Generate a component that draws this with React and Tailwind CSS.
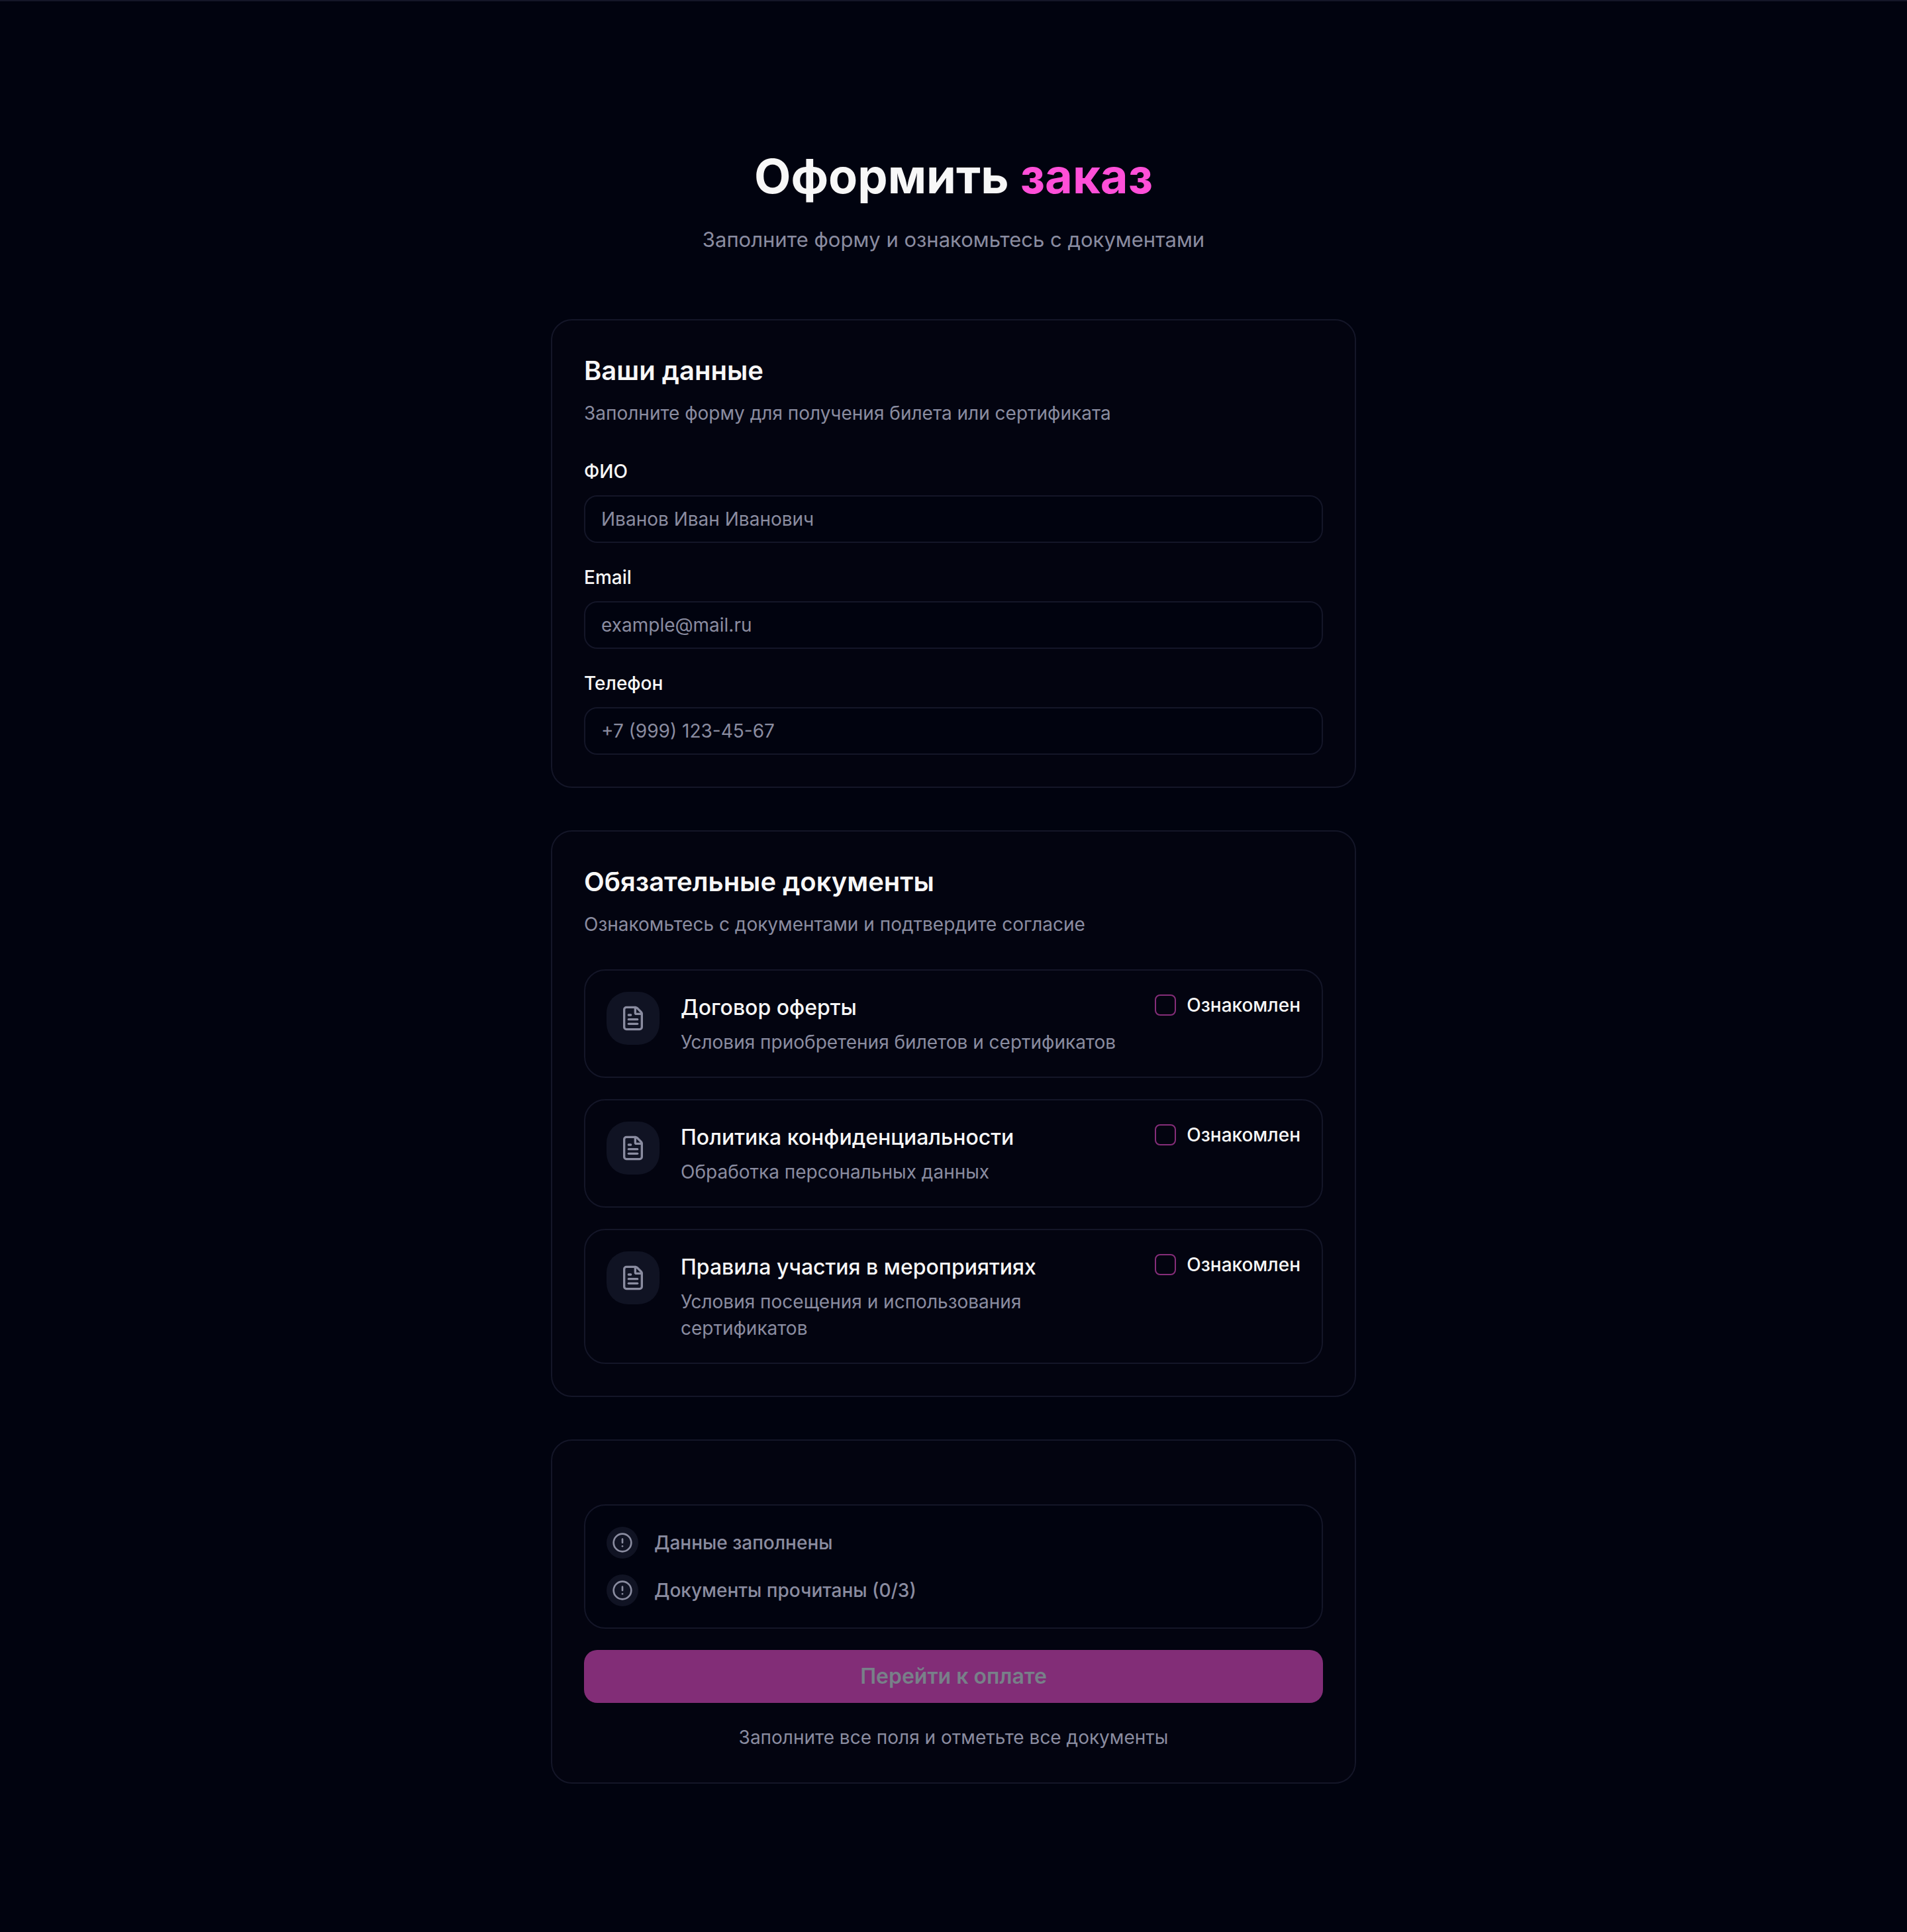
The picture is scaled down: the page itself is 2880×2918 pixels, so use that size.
import { useState } from 'react';
import { FileText, CircleAlert } from 'lucide-react';

const FIELDS = [
  { id: 'name', label: 'ФИО', type: 'text', placeholder: 'Иванов Иван Иванович' },
  { id: 'email', label: 'Email', type: 'email', placeholder: 'example@mail.ru' },
  { id: 'phone', label: 'Телефон', type: 'tel', placeholder: '+7 (999) 123-45-67' },
];

const DOCUMENTS = [
  { id: 'offer', title: 'Договор оферты', description: 'Условия приобретения билетов и сертификатов' },
  { id: 'privacy', title: 'Политика конфиденциальности', description: 'Обработка персональных данных' },
  { id: 'rules', title: 'Правила участия в мероприятиях', description: 'Условия посещения и использования сертификатов' },
];

function Card({ children }) {
  return (
    <section className="rounded-[32px] border-2 border-[#141628] bg-[#030410] p-12">
      {children}
    </section>
  );
}

function CardHeader({ title, description }) {
  return (
    <div className="mb-12 flex flex-col gap-4">
      <h2 className="text-[40px] leading-14 font-semibold text-[#f7f7f7]">{title}</h2>
      <p className="text-[28px] leading-10 text-[#8a8ca0]">{description}</p>
    </div>
  );
}

function StatusRow({ children }) {
  return (
    <li className="flex items-center gap-6">
      <span className="flex size-12 items-center justify-center rounded-full bg-[#101323]">
        <CircleAlert className="size-8 text-[#8a8ca0]" />
      </span>
      <span className="text-[28px] leading-10 font-medium text-[#8a8ca0]">{children}</span>
    </li>
  );
}

export default function App() {
  const [values, setValues] = useState({ name: '', email: '', phone: '' });
  const [accepted, setAccepted] = useState({});

  const acceptedCount = DOCUMENTS.filter((doc) => accepted[doc.id]).length;
  const filled = FIELDS.every((field) => values[field.id].trim() !== '');
  const canPay = filled && acceptedCount === DOCUMENTS.length;

  return (
    <div className="min-h-screen border-t-2 border-[#141628] bg-[#01030f] px-8 py-56 font-['Inter',sans-serif] text-[#f7f7f7]">
      <main className="mx-auto w-full max-w-[1216px]">
        <header className="mb-24 flex flex-col gap-8 text-center">
          <h1 className="text-[72px] leading-20 font-bold">
            Оформить <span className="text-[#ff4fd8]">заказ</span>
          </h1>
          <p className="text-[31px] leading-12 text-[#8a8ca0]">Заполните форму и ознакомьтесь с документами</p>
        </header>

        <form className="flex flex-col gap-16" onSubmit={(e) => e.preventDefault()}>
          {/* Personal data */}
          <Card>
            <CardHeader title="Ваши данные" description="Заполните форму для получения билета или сертификата" />
            <div className="flex flex-col gap-8">
              {FIELDS.map((field) => (
                <div key={field.id} className="flex flex-col gap-4">
                  <label htmlFor={field.id} className="text-[28px] leading-10 font-medium">{field.label}</label>
                  <input
                    id={field.id}
                    type={field.type}
                    placeholder={field.placeholder}
                    value={values[field.id]}
                    onChange={(e) => setValues({ ...values, [field.id]: e.target.value })}
                    className="h-18 w-full rounded-[20px] border-2 border-[#141628] bg-[#01030f] px-6 text-[28px] outline-none placeholder:text-[#8a8ca0] focus:border-[#852d79]"
                  />
                </div>
              ))}
            </div>
          </Card>

          {/* Documents */}
          <Card>
            <CardHeader title="Обязательные документы" description="Ознакомьтесь с документами и подтвердите согласие" />
            <div className="flex flex-col gap-8">
              {DOCUMENTS.map((doc) => (
                <article key={doc.id} className="flex items-start gap-8 rounded-[32px] border-2 border-[#141628] p-8">
                  <div className="flex size-20 shrink-0 items-center justify-center rounded-[32px] bg-[#101323]">
                    <FileText className="size-10 text-[#8a8ca0]" />
                  </div>
                  <div className="flex min-w-0 flex-1 flex-col gap-2">
                    <h3 className="text-[32px] leading-12 font-medium">{doc.title}</h3>
                    <p className="text-[28px] leading-10 text-[#8a8ca0]">{doc.description}</p>
                  </div>
                  <label className="flex shrink-0 items-center gap-4 text-[28px] leading-10 font-medium">
                    <input
                      type="checkbox"
                      checked={!!accepted[doc.id]}
                      onChange={(e) => setAccepted({ ...accepted, [doc.id]: e.target.checked })}
                      className="size-8 appearance-none rounded-lg border-2 border-[#852d79] checked:bg-[#ff4fd8]"
                    />
                    Ознакомлен
                  </label>
                </article>
              ))}
            </div>
          </Card>

          {/* Payment */}
          <Card>
            <div className="mt-12 flex flex-col gap-8">
              <ul className="flex flex-col gap-6 rounded-[32px] border-2 border-[#141628] bg-[#01030f] p-8">
                <StatusRow>Данные заполнены</StatusRow>
                <StatusRow>Документы прочитаны ({acceptedCount}/{DOCUMENTS.length})</StatusRow>
              </ul>
              <button
                type="submit"
                disabled={!canPay}
                className="h-20 w-full rounded-[20px] bg-[#ff4fd8] text-[32px] font-semibold disabled:bg-[#822d77] disabled:text-[#788089]"
              >
                Перейти к оплате
              </button>
              <p className="text-center text-[28px] leading-10 text-[#8a8ca0]">Заполните все поля и отметьте все документы</p>
            </div>
          </Card>
        </form>
      </main>
    </div>
  );
}
